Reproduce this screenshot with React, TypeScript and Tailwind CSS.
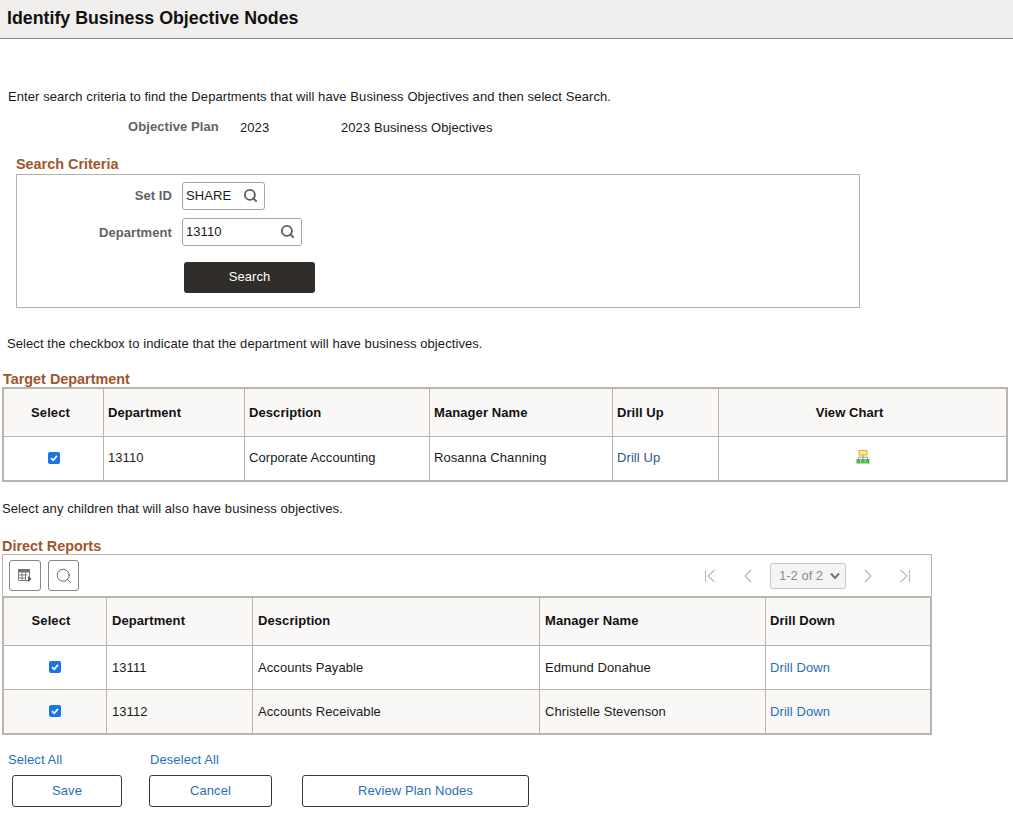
import { Search } from "lucide-react";

const directReports = [
  { id: "13111", description: "Accounts Payable", manager: "Edmund Donahue", stripe: false },
  { id: "13112", description: "Accounts Receivable", manager: "Christelle Stevenson", stripe: true },
];

function Check() {
  return (
    <span className="-mt-[1px] flex h-[12px] w-[12px] items-center justify-center rounded-[2px] bg-[#1a73e8]">
      <svg width="10" height="10" viewBox="0 0 10 10" fill="none">
        <path d="M2 5.2 4.200 7.300 8 2.900" stroke="#fff" strokeWidth="1.8" />
      </svg>
    </span>
  );
}

function SearchInput({ value, width }: { value: string; width: string }) {
  return (
    <div className={`flex h-[28px] items-center justify-between rounded-[3px] border border-[#a8a4a0] pl-[3px] pr-[6px] text-[#1a1a1a] ${width}`}>
      <span>{value}</span>
      <Search size={15} strokeWidth={3} className="-mt-[2px] text-[#5f5c59]" />
    </div>
  );
}

function OutlineButton({ label, width, className }: { label: string; width: string; className?: string }) {
  return (
    <div className={`flex h-[32px] items-center justify-center rounded-[3px] border border-[#3a3735] text-[#2a6fb5] ${width} ${className ?? ""}`}>
      {label}
    </div>
  );
}

export default function App() {
  return (
    <div className="h-[814px] w-[1013px] overflow-hidden bg-white font-['Liberation_Sans',Arial,sans-serif] text-[13px] tracking-[0.08px] text-[#1a1a1a]">
      {/* Page title */}
      <div className="flex h-[39px] items-center border-b border-[#8a8580] bg-[#f0efee] pb-[2px] pl-[7px] text-[17.8px] font-bold tracking-normal text-[#111]">
        Identify Business Objective Nodes
      </div>

      <p className="ml-[8px] mt-[50px] h-[16px] leading-[16px]">
        Enter search criteria to find the Departments that will have Business Objectives and then select Search.
      </p>

      <div className="mt-[14px] flex h-[16px] items-center leading-[16px]">
        <span className="-mt-[1px] ml-[128px] w-[112px] font-bold text-[#5f6368]">Objective Plan</span>
        <span className="mt-[1px] w-[101px]">2023</span>
        <span className="mt-[1px]">2023 Business Objectives</span>
      </div>

      {/* Search criteria */}
      <h2 className="ml-[16px] mt-[21px] h-[16px] text-[14.4px] font-bold leading-[16px] tracking-normal text-[#a0552d]">Search Criteria</h2>
      <div className="ml-[16px] mt-[2px] h-[134px] w-[844px] border border-[#b5b0aa] pt-[7px]">
        <div className="flex items-center">
          <span className="w-[155px] text-right font-bold text-[#5f6368]">Set ID</span>
          <SearchInput value="SHARE" width="ml-[10px] w-[83px]" />
        </div>
        <div className="mt-[8px] flex items-center">
          <span className="w-[155px] pt-[1px] text-right font-bold text-[#5f6368]">Department</span>
          <SearchInput value="13110" width="ml-[10px] w-[120px]" />
        </div>
        <div className="ml-[167px] mt-[16px] flex h-[31px] w-[131px] items-center justify-center rounded-[3px] bg-[#302d2a] pb-[2px] text-white">
          Search
        </div>
      </div>

      <p className="ml-[7px] mt-[28px] h-[16px] leading-[16px]">
        Select the checkbox to indicate that the department will have business objectives.
      </p>

      {/* Target department */}
      <h2 className="ml-[3px] mt-[19px] h-[16px] text-[14.4px] font-bold leading-[16px] tracking-normal text-[#a0552d]">Target Department</h2>
      <div className="ml-[2px] w-[1006px] border-2 border-[#b9b4ae]">
        <div className="grid h-[48px] grid-cols-[99px_141px_185px_183px_106px_1fr] items-stretch border-b border-[#b9b4ae] bg-[#f9f8f6] font-bold text-[#111]">
          <div className="flex items-center justify-center pr-[6px]">Select</div>
          <div className="flex items-center border-l border-[#b9b4ae] pl-[4px]">Department</div>
          <div className="flex items-center border-l border-[#b9b4ae] pl-[4px]">Description</div>
          <div className="flex items-center border-l border-[#b9b4ae] pl-[4px]">Manager Name</div>
          <div className="flex items-center border-l border-[#b9b4ae] pl-[4px]">Drill Up</div>
          <div className="flex items-center justify-center border-l border-[#b9b4ae] pr-[26px]">View Chart</div>
        </div>
        <div className="grid h-[43px] grid-cols-[99px_141px_185px_183px_106px_1fr] items-stretch">
          <div className="flex items-center justify-center pb-[1px]"><Check /></div>
          <div className="flex items-center border-l border-[#b9b4ae] pb-[2px] pl-[4px] text-[#2b1a1a]">13110</div>
          <div className="flex items-center border-l border-[#b9b4ae] pb-[2px] pl-[4px]">Corporate Accounting</div>
          <div className="flex items-center border-l border-[#b9b4ae] pb-[2px] pl-[4px]">Rosanna Channing</div>
          <div className="flex items-center border-l border-[#b9b4ae] pb-[2px] pl-[4px] text-[#2f5597]">Drill Up</div>
          <div className="flex items-center justify-center border-l border-[#b9b4ae] pb-[2px]">
            <svg width="14" height="14" viewBox="0 0 14 14" className="-mt-[2px]">
              <rect x="3" y="0.5" width="8" height="4.5" fill="#fde58a" stroke="#f0a92e" />
              <path d="M7 5v3M2.500 9V7.200h9V9M7 7.200V9" stroke="#9a9a9a" fill="none" />
              <rect x="0.5" y="9" width="13" height="4.5" fill="#4cb84c" />
              <path d="M4.800 9v4.500M9.200 9v4.500" stroke="#a8e0a8" />
            </svg>
          </div>
        </div>
      </div>

      <p className="ml-[2px] mt-[19px] h-[16px] leading-[16px]">Select any children that will also have business objectives.</p>

      {/* Direct reports */}
      <h2 className="ml-[2px] mt-[21px] h-[16px] text-[14.4px] font-bold leading-[16px] tracking-normal text-[#a0552d]">Direct Reports</h2>
      <div className="ml-[2px] w-[930px]">
        <div className="flex h-[42px] items-center border-x border-t border-[#b9b4ae] pl-[6px]">
          <div className="flex h-[31px] w-[32px] items-center justify-center rounded-[3px] border border-[#8a8580]">
            <svg width="16" height="16" viewBox="0 0 16 16" fill="none" stroke="#77736f" strokeWidth="0.9">
              <path d="M1.500 1.500h11v11h-11z" />
              <path d="M1.500 1.500h11V4h-11z" fill="#77736f" />
              <path d="M1.500 7h9M1.500 10h7M5 4v8.500M8.500 4v8.500" />
              <path d="M11 8l3.500 3-3.500 3z" fill="#5f5c59" stroke="none" />
            </svg>
          </div>
          <div className="ml-[7px] flex h-[31px] w-[31px] items-center justify-center rounded-[3px] border border-[#8a8580]">
            <Search size={18} strokeWidth={1.2} className="text-[#5f5c59]" />
          </div>
          <div className="ml-auto flex items-center text-[#b0aca8]">
            <svg width="14" height="14" viewBox="0 0 14 14" fill="none" stroke="#b8b4b0" strokeWidth="1.1">
              <path d="M2.500 1v12M11.500 1 5 7l6.500 6" />
            </svg>
            <svg width="14" height="14" viewBox="0 0 14 14" fill="none" stroke="#b8b4b0" strokeWidth="1.1" className="ml-[24px]">
              <path d="M10 1 4 7l6 6" />
            </svg>
            <div className="ml-[15px] flex h-[26px] w-[76px] items-center justify-between rounded-[3px] border border-[#c8c4c0] bg-[#f5f4f2] pl-[8px] pr-[5px] tracking-normal text-[#8f8b87]">
              1-2 of 2
              <svg width="10" height="8" viewBox="0 0 10 8" fill="none" stroke="#77736f" strokeWidth="2">
                <path d="M1 1.500 5 6l4-4.500" />
              </svg>
            </div>
            <svg width="14" height="14" viewBox="0 0 14 14" fill="none" stroke="#b8b4b0" strokeWidth="1.1" className="ml-[15px]">
              <path d="M4 1l6 6-6 6" />
            </svg>
            <svg width="14" height="14" viewBox="0 0 14 14" fill="none" stroke="#b8b4b0" strokeWidth="1.1" className="ml-[23px] mr-[19px]">
              <path d="M2.500 1 9 7l-6.500 6M11.500 1v12" />
            </svg>
          </div>
        </div>
        <div className="border-2 border-[#b9b4ae]">
          <div className="grid h-[48px] grid-cols-[102px_146px_287px_226px_1fr] border-b border-[#b9b4ae] bg-[#f9f8f6] font-bold text-[#111]">
            <div className="flex items-center justify-center pb-[2px] pr-[8px]">Select</div>
            <div className="flex items-center border-l border-[#b9b4ae] pb-[2px] pl-[5px]">Department</div>
            <div className="flex items-center border-l border-[#b9b4ae] pb-[2px] pl-[5px]">Description</div>
            <div className="flex items-center border-l border-[#b9b4ae] pb-[2px] pl-[5px]">Manager Name</div>
            <div className="flex items-center border-l border-[#b9b4ae] pb-[2px] pl-[4px]">Drill Down</div>
          </div>
          {directReports.map((row) => (
            <div
              key={row.id}
              className={`grid h-[44px] grid-cols-[102px_146px_287px_226px_1fr] border-b border-[#b9b4ae] last:h-[43px] last:border-b-0 ${row.stripe ? "bg-[#f9f8f6]" : "bg-white"}`}
            >
              <div className="flex items-center justify-center"><Check /></div>
              <div className="flex items-center border-l border-[#b9b4ae] pl-[5px]">{row.id}</div>
              <div className="flex items-center border-l border-[#b9b4ae] pl-[5px]">{row.description}</div>
              <div className="flex items-center border-l border-[#b9b4ae] pl-[5px]">{row.manager}</div>
              <div className="flex items-center border-l border-[#b9b4ae] pl-[4px] text-[#2a6fb5]">Drill Down</div>
            </div>
          ))}
        </div>
      </div>

      <div className="ml-[8px] mt-[17px] flex h-[16px] items-center leading-[16px] text-[#2a6fb5]">
        <span className="w-[142px]">Select All</span>
        <span>Deselect All</span>
      </div>
      <div className="ml-[12px] mt-[7px] flex">
        <OutlineButton label="Save" width="w-[110px]" />
        <OutlineButton label="Cancel" width="w-[123px]" className="ml-[27px]" />
        <OutlineButton label="Review Plan Nodes" width="w-[227px]" className="ml-[30px]" />
      </div>
    </div>
  );
}
